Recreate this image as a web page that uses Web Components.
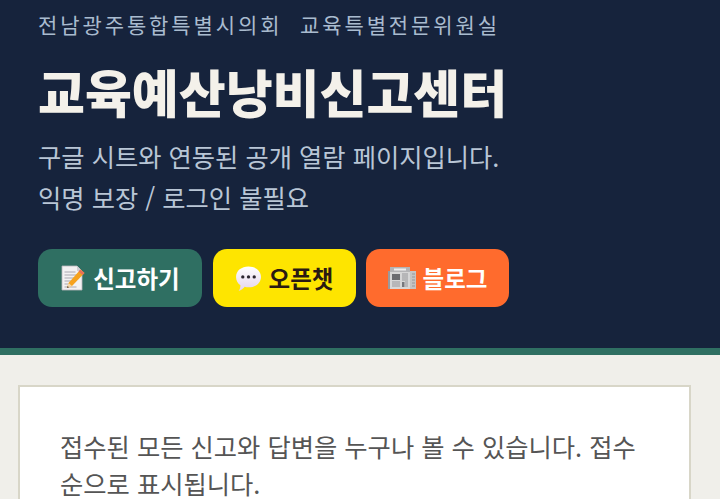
<!DOCTYPE html>
<html lang="ko">
<head>
<meta charset="utf-8">
<title>교육예산낭비신고센터</title>
<style>
    html, body { margin: 0; height: 100%; overflow: hidden; background: #f0efea; }
    body { font-family: "Noto Sans CJK KR", "Noto Sans", sans-serif; }
</style>
</head>
<body>
<site-header>
    <span slot="eyebrow">전남광주통합특별시의회 &nbsp;교육특별전문위원실</span>
    <span slot="title">교육예산낭비신고센터</span>
    <span slot="sub">구글 시트와 연동된 공개 열람 페이지입니다.<br>익명 보장 / 로그인 불필요</span>
    <link-button kind="report" icon="memo" style="width:164px">신고하기</link-button>
    <link-button kind="chat" icon="bubble" style="width:143px">오픈챗</link-button>
    <link-button kind="blog" icon="news" style="width:143px">블로그</link-button>
</site-header>
<notice-card>접수된 모든 신고와 답변을 누구나 볼 수 있습니다. 접수순으로 표시됩니다.</notice-card>

<script>
const ICONS = {
    memo: `<svg viewBox="0 0 26 26" width="26" height="28">
        <path d="M2 1h15l5 5v19H2z" fill="#f3f1f2" stroke="#b9b6bc" stroke-width=".8"/>
        <path d="M17 1v5h5z" fill="#cfcdd3"/>
        <path d="M4.500 7h11M4.500 10h13M4.500 13h10M4.500 16h7M4.500 19h5M4.500 22h12" stroke="#a9a7b0" stroke-width="1"/>
        <path d="M20.500 4.500l4 3.500L12 21l-5 2 1.500-5z" fill="#f6a21e"/>
        <path d="M20.500 4.500l4 3.500-2 2-4-3.500z" fill="#e8705a"/>
        <path d="M8.500 18l-1.500 5 5-2z" fill="#f4d9ae"/>
        <path d="M7.600 21l-.6 2 2-.8z" fill="#4a3a34"/>
    </svg>`,
    bubble: `<svg viewBox="0 0 26 26" width="27" height="27">
        <defs><linearGradient id="b" x1="0" y1="0" x2="0" y2="1">
            <stop offset="0" stop-color="#ffffff"/><stop offset="1" stop-color="#e4d4ec"/>
        </linearGradient></defs>
        <path d="M13 1.500c6.600 0 12 4 12 10s-5.400 10-12 10c-1.300 0-2.500-.2-3.600-.5C8 22.800 6 24.500 3.500 25c1.100-1.500 1.700-3.300 1.700-5.500C2.600 17.600 1 14.800 1 11.500c0-6 5.400-10 12-10z" fill="url(#b)"/>
        <circle cx="7.500" cy="11.500" r="1.600" fill="#2b2530"/>
        <circle cx="13" cy="11.500" r="1.600" fill="#2b2530"/>
        <circle cx="18.500" cy="11.500" r="1.600" fill="#2b2530"/>
    </svg>`,
    news: `<svg viewBox="0 0 28 26" width="28" height="26">
        <path d="M0 6h4v18H0z" fill="#9a9a9c"/>
        <path d="M22 6h6v18h-6z" fill="#c4c4c5"/>
        <path d="M2 2h20v22H2z" fill="#d6d6d6"/>
        <path d="M2 2h20v5H2z" fill="#b4b4b6"/>
        <path d="M6 3.500h12v2H6z" fill="#eeeeee"/>
        <path d="M4 9h8v6H4z" fill="#6b6c70"/>
        <path d="M4 17h8M4 19h8M4 21h8M14 9h6M14 11h6M14 13h6M14 15h6M17 17h3M17 19h3M17 21h3M24 9h3M24 12h3M24 15h3M24 18h3M24 21h3" stroke="#97979a" stroke-width="1"/>
        <path d="M14 17h2.500v5H14z" fill="#77787c"/>
    </svg>`,
}

class SiteHeader extends HTMLElement {
    constructor() {
        super()
        this.attachShadow({ mode: 'open' })
    }

    connectedCallback() {
        this.shadowRoot.innerHTML = `
            <style>
                :host {
                    display: block;
                    box-sizing: border-box;
                    height: 355px;
                    padding: 7px 38px 0;
                    background: #16233c;
                    border-bottom: 7px solid #2f6f62;
                }
                .eyebrow {
                    color: #a9bbcf;
                    font-size: 21px;
                    line-height: 34px;
                    letter-spacing: 2.9px;
                    white-space: nowrap;
                }
                .title {
                    margin: 15px 0 0;
                    color: #f4f1ea;
                    font-size: 51px;
                    line-height: 70px;
                    font-weight: 900;
                    white-space: nowrap;
                }
                .sub {
                    margin-top: 10px;
                    color: #b9c6d6;
                    font-size: 25.3px;
                    line-height: 41px;
                }
                .actions {
                    display: flex;
                    gap: 10.5px;
                    margin-top: 31px;
                }
            </style>
            <div class="eyebrow"><slot name="eyebrow"></slot></div>
            <h1 class="title"><slot name="title"></slot></h1>
            <div class="sub"><slot name="sub"></slot></div>
            <div class="actions"><slot></slot></div>
        `
    }
}

class LinkButton extends HTMLElement {
    constructor() {
        super()
        this.attachShadow({ mode: 'open' })
    }

    connectedCallback() {
        const icon = ICONS[this.getAttribute('icon')] || ''
        this.shadowRoot.innerHTML = `
            <style>
                :host {
                    display: flex;
                    align-items: center;
                    justify-content: center;
                    gap: 7px;
                    box-sizing: border-box;
                    height: 58px;
                    border-radius: 14px;
                    font-size: 23.5px;
                    font-weight: 700;
                    color: #fff;
                }
                :host([kind=report]) { background: #2f6f62; }
                :host([kind=chat]) { background: #fee500; color: #2a1a12; }
                :host([kind=blog]) { background: #ff6b2d; }
                svg { display: block; }
            </style>
            ${icon}
            <slot></slot>
        `
    }
}

class NoticeCard extends HTMLElement {
    constructor() {
        super()
        this.attachShadow({ mode: 'open' })
    }

    connectedCallback() {
        this.shadowRoot.innerHTML = `
            <style>
                :host {
                    display: block;
                    box-sizing: border-box;
                    margin: 30px 29px 0 18px;
                    padding: 41px 40px;
                    background: #fff;
                    border: 2px solid #d8d6c8;
                    color: #555;
                    font-size: 25.3px;
                    line-height: 37px;
                }
            </style>
            <slot></slot>
        `
    }
}

customElements.define('site-header', SiteHeader)
customElements.define('link-button', LinkButton)
customElements.define('notice-card', NoticeCard)
</script>
</body>
</html>
